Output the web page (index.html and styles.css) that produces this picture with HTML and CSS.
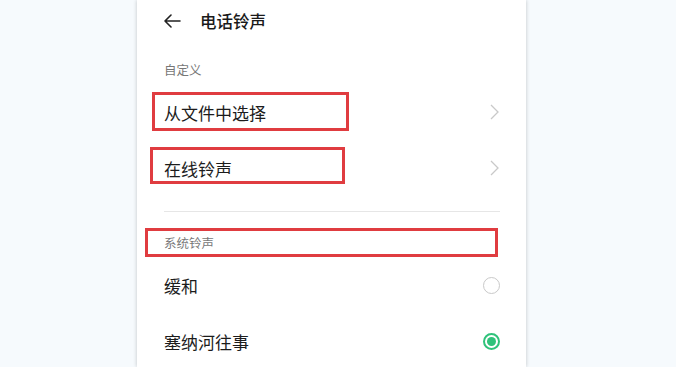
FILE: index.html
```html
<!DOCTYPE html>
<html lang="zh-CN">
<head>
<meta charset="utf-8">
<title>电话铃声</title>
<link rel="stylesheet" href="styles.css">
</head>
<body>
<div class="screen">
  <div class="header">
    <svg class="back" width="18" height="14" viewBox="0 0 18 14"><path d="M17 7H2M8 1L2 7l6 6" fill="none" stroke="#222" stroke-width="1.6" stroke-linecap="round" stroke-linejoin="round"/></svg>
    <span class="title">电话铃声</span>
  </div>

  <div class="label">自定义</div>

  <div class="row">
    <span class="text">从文件中选择</span>
    <svg class="chev" width="9" height="16" viewBox="0 0 9 16"><path d="M1 1l7 7-7 7" fill="none" stroke="#c9c9c9" stroke-width="1.3"/></svg>
    <div class="mark mark-1"></div>
  </div>
  <div class="row">
    <span class="text">在线铃声</span>
    <svg class="chev" width="9" height="16" viewBox="0 0 9 16"><path d="M1 1l7 7-7 7" fill="none" stroke="#c9c9c9" stroke-width="1.3"/></svg>
    <div class="mark mark-2"></div>
  </div>

  <div class="divider"></div>

  <div class="label label-sys">系统铃声<div class="mark mark-3"></div></div>

  <div class="row">
    <span class="text">缓和</span>
    <span class="radio"></span>
  </div>
  <div class="row">
    <span class="text">塞纳河往事</span>
    <span class="radio on"></span>
  </div>
</div>
</body>
</html>
```

FILE: styles.css
```css
html, body {
  margin: 0;
  padding: 0;
}
body {
  background: #f6fafd;
  height: 367px;
  overflow: hidden;
  font-family: "Noto Sans CJK SC", "Noto Sans", sans-serif;
}
.screen {
  margin-left: 137px;
  width: 389px;
  height: 367px;
  background: #fff;
  box-shadow: 0 0 4px rgba(0, 0, 0, 0.22);
  box-sizing: border-box;
  padding: 0 26px 0 27px;
}
.header {
  height: 42px;
  display: flex;
  align-items: center;
  gap: 19px;
}
.back {
  display: block;
  margin-left: -1px;
}
.title {
  font-size: 16.5px;
  font-weight: 500;
  color: #1a1a1a;
  line-height: 20px;
}
.label {
  position: relative;
  margin-top: 18px;
  height: 20px;
  line-height: 20px;
  font-size: 12.5px;
  color: #777;
}
.row {
  position: relative;
  height: 56px;
  display: flex;
  align-items: center;
  justify-content: space-between;
}
.label + .row {
  margin-top: 4px;
}
.text {
  font-size: 17px;
  color: #1c1c1c;
}
.chev {
  display: block;
  margin-right: 1px;
}
.divider {
  margin-top: 15px;
  height: 1px;
  background: #e6e6e6;
}
.label-sys {
  margin-top: 21px;
}
.mark {
  position: absolute;
  box-sizing: border-box;
  border: 3px solid #e03c40;
}
.mark-1 {
  left: -12px;
  top: 8px;
  width: 197px;
  height: 39px;
}
.mark-2 {
  left: -14px;
  top: 7px;
  width: 195px;
  height: 37px;
}
.mark-3 {
  left: -19px;
  top: -5px;
  width: 353px;
  height: 29px;
}
.radio {
  width: 17px;
  height: 17px;
  box-sizing: border-box;
  border-radius: 50%;
  border: 1.5px solid #c9c9c9;
  position: relative;
}
.radio.on {
  border: 2px solid #2fc27a;
}
.radio.on::after {
  content: "";
  position: absolute;
  left: 2px;
  top: 2px;
  width: 9px;
  height: 9px;
  border-radius: 50%;
  background: #2fc27a;
}
```
